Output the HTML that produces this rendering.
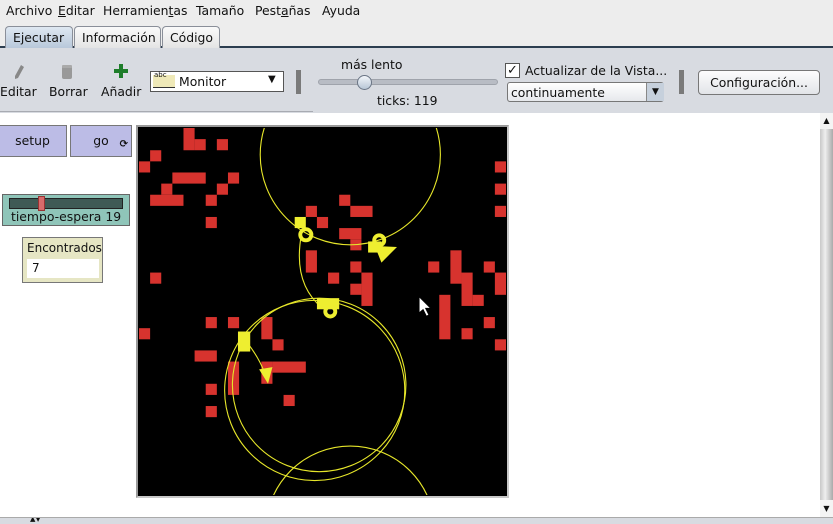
<!DOCTYPE html>
<html><head><meta charset="utf-8"><style>
*{margin:0;padding:0;box-sizing:border-box}
html,body{width:833px;height:524px;overflow:hidden}
body{background:#fff;font-family:"DejaVu Sans","Liberation Sans",sans-serif;font-size:12.4px;color:#111;position:relative}
.abs{position:absolute}
#menu{left:0;top:0;width:833px;height:22px;background:#ededed;}
#menu span{position:absolute;top:3px}
#tabs{left:0;top:22px;width:833px;height:26px;background:#ededed;border-bottom:2px solid #2c3e50}
.tab{position:absolute;top:4px;height:22px;border:1px solid #8a8f99;border-bottom:none;border-radius:4px 4px 0 0;background:linear-gradient(#fafafa,#e4e4e4);padding:3px 7px}
#tb{left:0;top:48px;width:833px;height:65px;background:#d8dbe1}
.lbl{position:absolute}
.sep{position:absolute;width:5px;background:#7a7a7a}
#view{left:136px;top:125px;width:373px;height:373px;border:2px solid #9a9a9a;border-right-color:#c8c8c8;border-bottom-color:#c8c8c8;background:#000;overflow:hidden}
.btn{position:absolute;background:#bcbce6;border:1px solid #777;text-align:center}
</style></head><body>
<div id="menu" class="abs">
<span style="left:6px">Archivo</span><span style="left:58px"><u>E</u>ditar</span><span style="left:103px">Herramien<u>t</u>as</span><span style="left:196px">Tamaño</span><span style="left:255px">Pest<u>a</u>ñas</span><span style="left:322px">Ayuda</span>
</div>
<div id="tabs" class="abs">
<div class="tab" style="left:5px;width:68px;background:linear-gradient(#dfe8f2,#b8c8da)">Ejecutar</div>
<div class="tab" style="left:74px;width:87px">Información</div>
<div class="tab" style="left:162px;width:58px">Código</div>
</div>
<div id="tb" class="abs">
<svg class="abs" style="left:12px;top:16px" width="14" height="16"><path d="M9 1l3 2-6 11-3 1 0-3z" fill="#888"/></svg>
<svg class="abs" style="left:60px;top:16px" width="14" height="16"><rect x="2" y="2" width="10" height="13" rx="2" fill="#999"/><rect x="2" y="1" width="10" height="3" rx="1" fill="#aaa"/></svg>
<svg class="abs" style="left:114px;top:16px" width="14" height="14"><path d="M5 0h4v5h5v4H9v5H5V9H0V5h5z" fill="#1e7d2a"/></svg>
<span class="lbl" style="left:0;top:36px">Editar</span>
<span class="lbl" style="left:49px;top:36px">Borrar</span>
<span class="lbl" style="left:101px;top:36px">Añadir</span>
<div class="abs" style="left:150px;top:23px;width:134px;height:21px;border:1px solid #555;background:#fff">
 <div class="abs" style="left:2px;top:3px;width:22px;height:13px;background:#efe9b8;border-bottom:1px solid #333"></div>
 <span class="abs" style="left:3px;top:-1px;font-size:7px">abc</span>
 <span class="abs" style="left:28px;top:2px">Monitor</span>
 <span class="abs" style="left:117px;top:2px;font-size:10px">▼</span>
</div>
<div class="sep" style="left:296px;top:22px;height:24px"></div>
<span class="lbl" style="left:341px;top:9px">más lento</span>
<div class="abs" style="left:318px;top:31px;width:180px;height:6px;border-radius:3px;background:#b8bcc4;border:1px solid #9fa3ab"></div>
<div class="abs" style="left:357px;top:27px;width:15px;height:15px;border-radius:50%;background:linear-gradient(#f3f6fa,#b8c6d6);border:1px solid #6a7585"></div>
<span class="lbl" style="left:377px;top:45px">ticks: 119</span>
<div class="abs" style="left:505px;top:15px;width:15px;height:15px;border:1px solid #555;background:#fff;font-size:13px;line-height:13px;text-align:center">✓</div>
<span class="lbl" style="left:525px;top:15px">Actualizar de la Vista...</span>
<div class="abs" style="left:507px;top:34px;width:157px;height:20px;border:1px solid #777;border-radius:3px;background:linear-gradient(#fff,#e6e8ec)">
 <span class="abs" style="left:3px;top:2px">continuamente</span>
 <div class="abs" style="left:138px;top:0;width:18px;height:18px;background:#c6d0dc;border-left:1px solid #888;font-size:9px;text-align:center;line-height:18px">▼</div>
</div>
<div class="sep" style="left:679px;top:22px;height:24px"></div>
<div class="abs" style="left:698px;top:22px;width:122px;height:25px;border:1px solid #777;border-radius:4px;background:linear-gradient(#fdfdfd,#e2e4e8);text-align:center;line-height:23px">Configuración...</div>
<div class="abs" style="left:0;top:63px;width:313px;height:1px;background:#a8abb2"></div>
</div>
<div class="abs" style="left:820px;top:113px;width:13px;height:404px;background:linear-gradient(90deg,#c8c8c8,#eee 40%,#aaa)"></div>
<div class="abs" style="left:820px;top:113px;width:13px;height:16px;background:#f4f4f4;font-size:8px;text-align:center;line-height:16px">▲</div>
<div class="abs" style="left:820px;top:500px;width:13px;height:17px;background:#f4f4f4;font-size:8px;text-align:center;line-height:17px">▼</div>
<div class="abs" style="left:0;top:517px;width:833px;height:7px;background:#d8dbe1;border-top:1px solid #aaa;overflow:hidden"><span class="abs" style="left:30px;top:-3px;font-size:7px">▲▼</span></div>
<div class="btn" style="left:-2px;top:125px;width:69px;height:32px;line-height:30px">setup</div>
<div class="btn" style="left:70px;top:125px;width:62px;height:32px;line-height:30px">go<span style="position:absolute;right:3px;top:4px;font-size:10px;font-weight:bold">⟳</span></div>
<div class="abs" style="left:2px;top:194px;width:128px;height:32px;background:#8fc5b9;border:1px solid #666">
 <div class="abs" style="left:6px;top:3px;width:114px;height:11px;background:#3f5a55;border:1px solid #222"></div>
 <div class="abs" style="left:35px;top:1px;width:7px;height:15px;background:#d86b6b;border:1px solid #933"></div>
 <span class="abs" style="left:8px;top:14px">tiempo-espera 19</span>
</div>
<div class="abs" style="left:22px;top:237px;width:81px;height:46px;background:#e6e6c4;border:1px solid #777">
 <span class="abs" style="left:4px;top:3px;font-size:12px">Encontrados</span>
 <div class="abs" style="left:4px;top:21px;width:72px;height:19px;background:#fff"><span class="abs" style="left:5px;top:2px;font-size:12px">7</span></div>
</div>
<div id="view" class="abs">
<svg class="abs" style="left:1px;top:1px" width="367" height="367" viewBox="0 0 33 33">
<g fill="#d7332e">
<rect x="4" y="0" width="1" height="2"/><rect x="5" y="1" width="1" height="1"/><rect x="7" y="1" width="1" height="1"/><rect x="1" y="2" width="1" height="1"/><rect x="0" y="3" width="1" height="1"/><rect x="3" y="4" width="3" height="1"/><rect x="8" y="4" width="1" height="1"/><rect x="2" y="5" width="1" height="1"/><rect x="7" y="5" width="1" height="1"/><rect x="1" y="6" width="3" height="1"/><rect x="6" y="6" width="1" height="1"/><rect x="6" y="8" width="1" height="1"/>
<rect x="32" y="3" width="1" height="1"/><rect x="32" y="5" width="1" height="1"/><rect x="32" y="7" width="1" height="1"/><rect x="18" y="6" width="1" height="1"/><rect x="19" y="7" width="2" height="1"/><rect x="15" y="7" width="1" height="1"/><rect x="16" y="8" width="1" height="1"/><rect x="18" y="9" width="2" height="1"/><rect x="19" y="10" width="1" height="1"/><rect x="15" y="11" width="1" height="2"/><rect x="19" y="12" width="1" height="1"/><rect x="17" y="13" width="1" height="1"/><rect x="20" y="13" width="1" height="3"/><rect x="19" y="14" width="1" height="1"/>
<rect x="26" y="12" width="1" height="1"/><rect x="28" y="11" width="1" height="3"/><rect x="29" y="13" width="1" height="3"/><rect x="30" y="15" width="1" height="1"/><rect x="31" y="12" width="1" height="1"/><rect x="32" y="13" width="1" height="2"/><rect x="1" y="13" width="1" height="1"/><rect x="27" y="15" width="1" height="4"/>
<rect x="6" y="17" width="1" height="1"/><rect x="8" y="17" width="1" height="1"/><rect x="11" y="17" width="1" height="2"/><rect x="0" y="18" width="1" height="1"/><rect x="12" y="19" width="1" height="1"/><rect x="5" y="20" width="2" height="1"/><rect x="8" y="21" width="1" height="3"/><rect x="11" y="21" width="1" height="2"/><rect x="12" y="21" width="3" height="1"/><rect x="6" y="23" width="1" height="1"/><rect x="13" y="24" width="1" height="1"/><rect x="6" y="25" width="1" height="1"/><rect x="29" y="18" width="1" height="1"/><rect x="31" y="17" width="1" height="1"/><rect x="32" y="19" width="1" height="1"/>
</g>
<g fill="none" stroke="#e6e62a" stroke-width="0.1">
<circle cx="19" cy="2.4" r="8.1"/>
<circle cx="15.8" cy="23.6" r="8.1"/>
<circle cx="16.2" cy="23.1" r="7.8"/>
<circle cx="19" cy="36.2" r="7.6"/>
<path d="M14.6 9.6 Q13.8 14 16.5 16.2"/>
<path d="M9 18.5 Q10.5 20 11.3 22"/>
</g>
<g fill="#eeee30">
<rect x="14" y="8" width="1" height="1"/>
<rect x="16" y="15.3" width="2" height="1"/>
<rect x="8.9" y="18.3" width="1.1" height="1.8"/>
<rect x="20.6" y="10.2" width="1.2" height="1"/>
<path d="M21.2 10.6 L23.2 10.7 L21.8 12.1z"/>
<path d="M10.8 21.7 L12 21.5 L11.6 23z"/>
</g>
<g fill="none" stroke="#eeee30" stroke-width="0.35">
<circle cx="15" cy="9.6" r="0.5"/>
<circle cx="17.2" cy="16.5" r="0.45"/>
<circle cx="21.6" cy="10.1" r="0.45"/>
</g>
<path d="M25.2 15.2 l0 1.4 0.35-0.3 0.3 0.6 0.2-0.1 -0.3-0.6 0.45 0z" fill="#fff" stroke="#000" stroke-width="0.05"/>
</svg>
</div>
</body></html>
